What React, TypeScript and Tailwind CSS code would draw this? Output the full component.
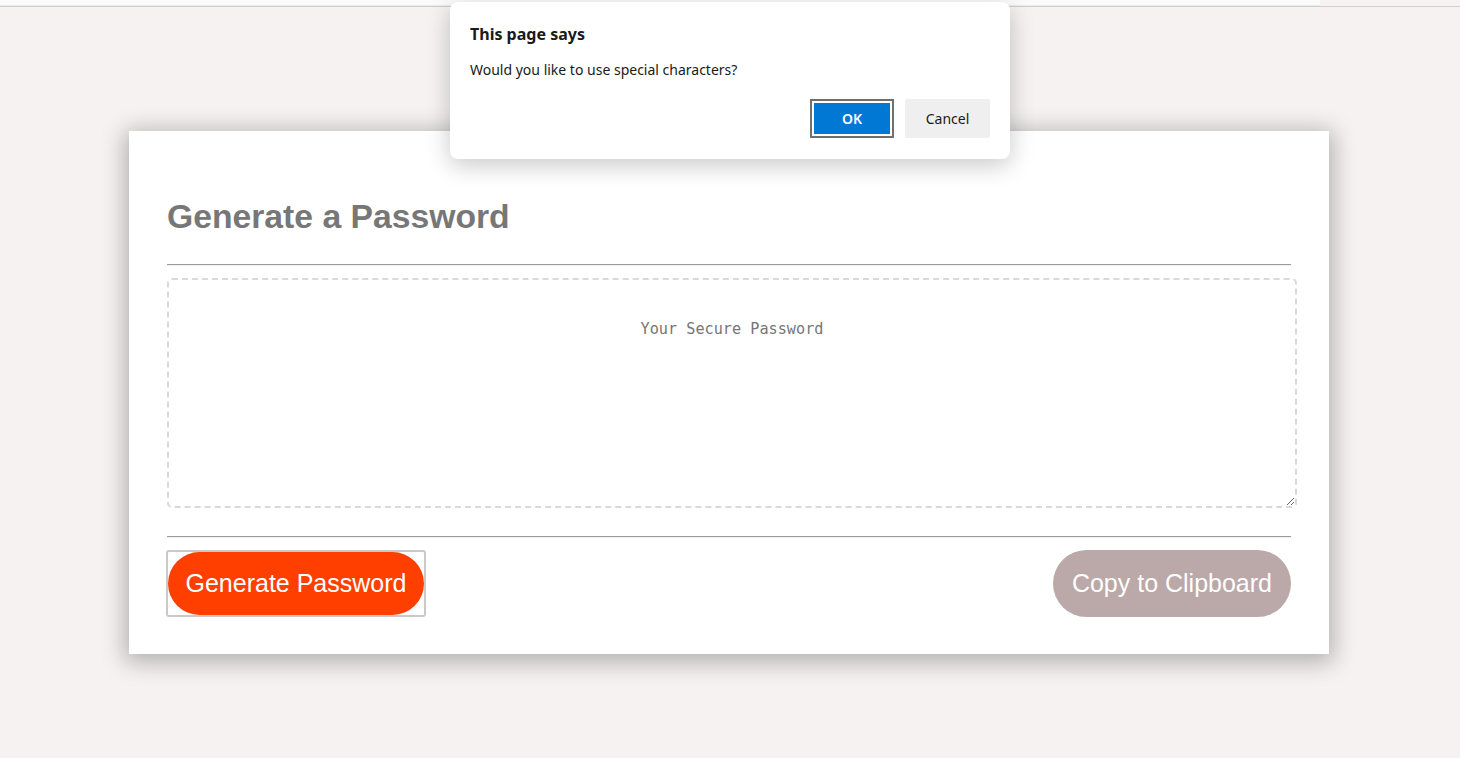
import React, { useState } from 'react';

const App: React.FC = () => {
  const [password, setPassword] = useState('');

  return (
    <div className="relative w-full h-[758px] overflow-hidden bg-[#f5f2f1] font-['Liberation_Sans',Arial,sans-serif]">
      {/* Browser chrome strip */}
      <div className="h-[6px] w-[1320px] bg-[#fbfbfb] border-b border-[#ececec]" />
      <div className="h-px w-full bg-[#cfcfcf]" />

      {/* Card */}
      <div className="ml-[129px] mt-[124px] w-[1200px] bg-white shadow-[0_4px_22px_4px_rgba(0,0,0,0.28)] px-[38px] pt-[66px] pb-[37px]">
        <h2 className="text-[33.7px] leading-[38px] font-bold text-[#777777]">Generate a Password</h2>

        <div className="mt-[29px]">
          <div className="h-px bg-[#9c9c9c]" />
          <div className="h-px bg-[#eeeeee]" />
        </div>

        <textarea
          readOnly
          value={password}
          onChange={(e) => setPassword(e.target.value)}
          placeholder="Your Secure Password"
          className="block mt-[12px] w-[1130px] h-[230px] border-2 border-dashed border-[#d9d9d9] rounded-[5px] pt-[40px] px-4 text-center text-[15.2px] leading-[18px] font-['DejaVu_Sans_Mono',monospace] text-[#555] placeholder:text-[#767676] outline-none"
        />

        <div className="mt-[28px]">
          <div className="h-px bg-[#9c9c9c]" />
          <div className="h-px bg-[#eeeeee]" />
        </div>

        <div className="mt-[12px] flex items-center justify-between">
          <span className="flex border-2 border-[#c9c9c9] rounded-[3px] -m-px">
            <button
              onClick={() => setPassword(Math.random().toString(36).slice(2, 14))}
              className="h-[63px] px-[17.5px] rounded-full bg-[#ff3f00] text-white text-[25px] leading-none"
            >
              Generate Password
            </button>
          </span>
          <button className="h-[67px] px-[19px] rounded-full bg-[#bba8a8] text-white text-[25px] leading-none">
            Copy to Clipboard
          </button>
        </div>
      </div>

      {/* Alert dialog */}
      <div className="absolute top-[2px] left-[450px] w-[560px] h-[157px] bg-white rounded-[8px] shadow-[0_6px_24px_rgba(0,0,0,0.22)] px-[20px] pt-[21px] font-['Noto_Sans',sans-serif] text-[#1a1a1a]">
        <div className="text-[16px] leading-[22px] font-bold">This page says</div>
        <div className="mt-[15px] text-[14px] leading-[20px]">Would you like to use special characters?</div>
        <div className="mt-[19px] flex justify-end gap-[11px]">
          <span className="flex border-2 border-[#6f6f6f] p-[2px] w-[84px] h-[39px]">
            <button className="flex-1 bg-[#0078d4] text-white text-[14px] font-semibold">OK</button>
          </span>
          <button className="w-[85px] h-[39px] bg-[#efefef] rounded-[2px] text-[14px] text-[#1a1a1a]">Cancel</button>
        </div>
      </div>
    </div>
  );
};

export default App;
